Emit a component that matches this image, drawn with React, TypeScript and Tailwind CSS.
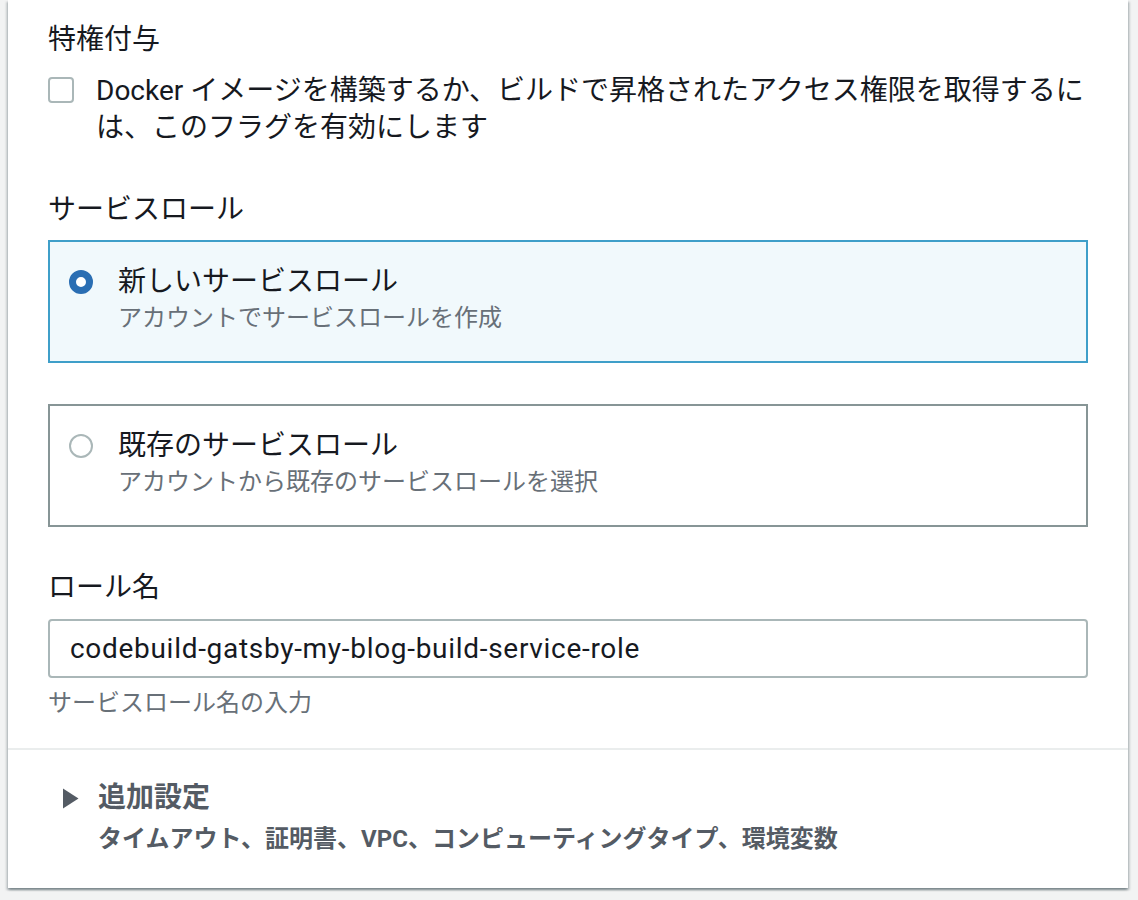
const font = "font-['Roboto','Noto_Sans_CJK_JP',sans-serif]"

export default function App() {
  return (
    <main className={`min-h-[900px] bg-[#f2f3f3] pl-[8px] pr-[10px] ${font}`}>
      <div className="bg-white shadow-[0_2px_2px_0_rgba(0,28,36,0.3),2px_2px_2px_0_rgba(0,28,36,0.15),-2px_2px_2px_0_rgba(0,28,36,0.15)]">
        <div className="px-[40px] pt-[20px] pb-[29px] text-[#16191f]">
          {/* 特権付与 */}
          <p className="text-[28px] leading-[40px]">特権付与</p>
          <label className="mt-[12px] flex items-start gap-[22px]">
            <span className="mt-[5px] h-[26px] w-[26px] shrink-0 rounded-[4px] border-2 border-[#aab7b8] bg-white" />
            <span className="text-[28px] leading-[37px]">
              Docker イメージを構築するか、ビルドで昇格されたアクセス権限を取得するには、このフラグを有効にします
            </span>
          </label>

          {/* サービスロール */}
          <p className="mt-[44px] text-[28px] leading-[40px]">サービスロール</p>
          <RoleTile
            selected
            title="新しいサービスロール"
            desc="アカウントでサービスロールを作成"
            className="mt-[10px]"
          />
          <RoleTile
            title="既存のサービスロール"
            desc="アカウントから既存のサービスロールを選択"
            className="mt-[41px]"
          />

          {/* ロール名 */}
          <p className="mt-[41px] text-[28px] leading-[40px]">ロール名</p>
          <div className="mt-[11px] flex h-[59px] items-center rounded-[4px] border-2 border-[#aab7b8] px-[20px] text-[28px] tracking-[0.7px]">
            codebuild-gatsby-my-blog-build-service-role
          </div>
          <p className="mt-[9px] text-[24px] leading-[32px] text-[#687078]">サービスロール名の入力</p>
        </div>

        <div className="h-[2px] bg-[#eaeded]" />

        {/* 追加設定 */}
        <div className="px-[40px] pt-[28px] pb-[33px] text-[#545b64]">
          <div className="flex items-center">
            <svg width="17" height="21" viewBox="0 0 17 21" className="ml-[14px] mr-[19px] shrink-0">
              <path d="M1 0.5 L16.5 10.5 L1 20.5 Z" fill="#545b64" />
            </svg>
            <span className="text-[28px] font-bold leading-[40px]">追加設定</span>
          </div>
          <p className="mt-[5px] pl-[50px] text-[24px] font-bold leading-[32px]">
            タイムアウト、証明書、VPC、コンピューティングタイプ、環境変数
          </p>
        </div>
      </div>
    </main>
  )
}

function RoleTile({ selected, title, desc, className }: { selected?: boolean; title: string; desc: string; className?: string }) {
  return (
    <div
      className={`flex items-start gap-[25px] border-2 pl-[19px] pt-[20px] pb-[27px] ${
        selected ? 'border-[#3f9fc9] bg-[#f1f9fc]' : 'border-[#879596] bg-white'
      } ${className ?? ''}`}
    >
      {selected ? (
        <span className="mt-[8px] h-[24px] w-[24px] shrink-0 rounded-full border-[7px] border-[#2a6eb3] bg-white" />
      ) : (
        <span className="mt-[8px] h-[24px] w-[24px] shrink-0 rounded-full border-2 border-[#aab7b8] bg-white" />
      )}
      <div>
        <p className="text-[28px] leading-[40px]">{title}</p>
        <p className="text-[24px] leading-[32px] text-[#687078]">{desc}</p>
      </div>
    </div>
  )
}
